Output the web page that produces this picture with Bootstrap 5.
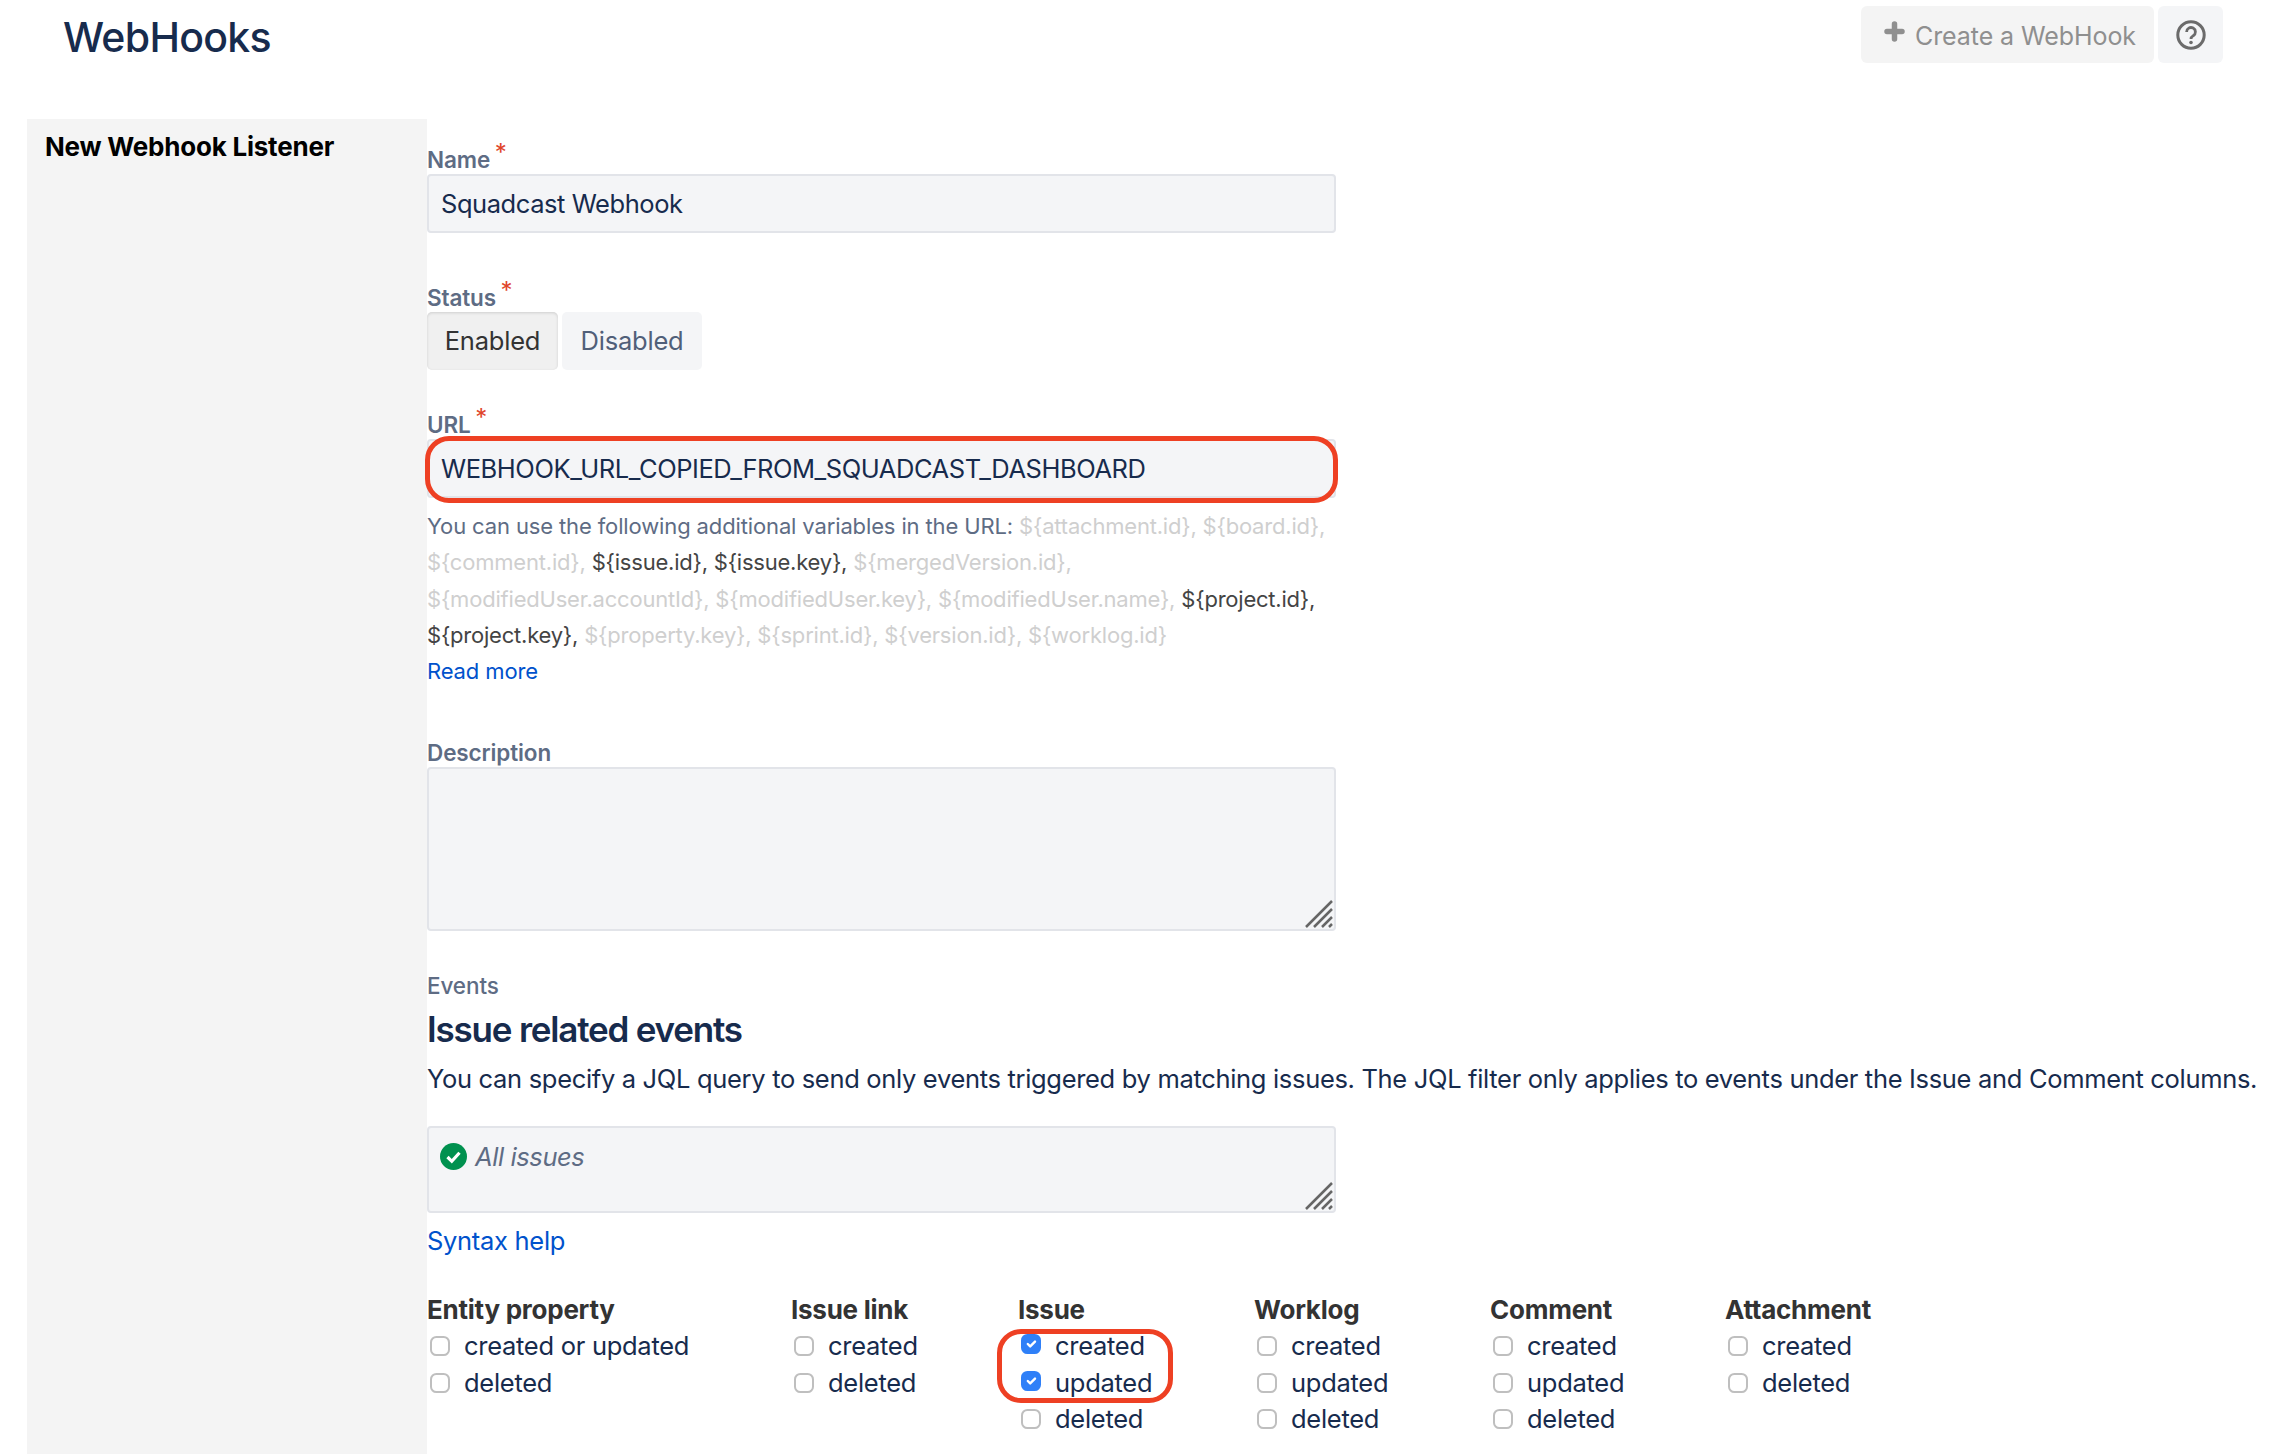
<!doctype html>
<html lang="en">
<head>
<meta charset="utf-8">
<title>WebHooks</title>
<link href="https://cdn.jsdelivr.net/npm/bootstrap@5.3.0/dist/css/bootstrap.min.css" rel="stylesheet">
<style>
html,body{height:1454px;overflow:hidden;background:#fff}
body{font-family:Inter,"Liberation Sans",sans-serif;color:#172b4d;font-size:25.5px}
.page-head{height:119px;padding:14px 51px 0 63px}
.page-title{font-size:41px;font-weight:500;line-height:46px;letter-spacing:-.7px;color:#172b4d;margin:0}
.head-actions{margin-top:-8px}
.act-btn{width:293px;height:57px;background:#f4f4f4;border:0;border-radius:6px;color:#8f8f8f;font-size:25px;line-height:57px;padding:3px 0 0 23px;letter-spacing:-.08px}
.plus-ico{margin:-9px 10px 0 0}
.help-btn{width:65px;height:57px;background:#f4f5f7;border:0;border-radius:6px;padding:0}
.side-panel{width:400px;margin-left:27px;background:#f4f4f4;height:1335px;padding:10px 18px;flex:none}
.side-title{font-size:26px;font-weight:700;color:#000;line-height:36px;letter-spacing:-.22px}
.main-pane{width:1800px;flex:none}
.fld-label{display:block;font-size:22.5px;font-weight:600;color:#5e6c84;line-height:28px;margin:0;letter-spacing:-.12px}
.req{color:#e0452a;font-size:24px;line-height:1;position:relative;top:-7px;left:-1px;font-weight:400}
.lab-name{margin-top:27px}
.lab-status{margin-top:51px}
.lab-url{margin-top:41px}
.lab-desc{margin-top:50px}
.fld-input{width:909px;height:59px;background:#f4f5f7;border:2px solid #e2e4e9;border-radius:4px;color:#172b4d;font-size:25.5px;padding:0 12px;letter-spacing:-.44px;display:block}
.fld-input:focus{background:#f4f5f7;border-color:#e2e4e9;box-shadow:none;color:#172b4d}
.tog-btn{height:58px;border:0;border-radius:5px;font-size:25.5px;line-height:58px;padding:0;background:#f4f5f7;color:#505f79;letter-spacing:-.2px}
.tog-on{width:131px;background:#f0f0f0;color:#333;box-shadow:inset 0 1px 3px rgba(0,0,0,.14)}
.tog-off{width:140px}
.note-wrap{position:relative;width:909px}
.url-ring{position:absolute;left:-2px;top:-3px;width:913px;height:67px;border:5px solid #ee4023;border-radius:24px;pointer-events:none}
.help-text{width:909px;font-size:22px;line-height:36.25px;color:#5e6c84;margin-top:10px;letter-spacing:-.13px}
.v-off{color:#cfcfcf;letter-spacing:-.2px}
.v-on{color:#444;letter-spacing:-.22px}
.jira-link{color:#0052cc;text-decoration:none}
.area-box{position:relative;width:909px;background:#f4f5f7;border:2px solid #e2e4e9;border-radius:4px}
.area-desc{height:164px}
.area-jql{height:87px;margin-top:29px;padding:11px}
.grip{position:absolute;right:1px;bottom:1px;width:28px;height:28px}
.events-label{font-size:22.5px;font-weight:500;color:#5e6c84;line-height:28px;letter-spacing:-.1px;margin-top:41px}
.sec-title{font-size:35px;font-weight:600;color:#172b4d;line-height:44px;letter-spacing:-1.2px;margin:7px 0 0}
.sec-desc{font-size:25.5px;line-height:36px;color:#172b4d;white-space:nowrap;margin:10px 0 0;letter-spacing:-.32px}
.ok-ico{margin:4px 8px 0 0;flex:none}
.jql-text{font-style:italic;color:#5e6c84;font-size:25.5px;line-height:36px;letter-spacing:-.4px}
.syntax-row{line-height:36px;margin-top:10px;letter-spacing:-.3px}
.ev-grid{display:flex;margin-top:33px}
.ev-col{position:relative;flex:none}
.ev-head{font-size:26px;font-weight:700;color:#333;line-height:36px;letter-spacing:-.25px}
.ev-row{display:flex;align-items:center;height:36.25px;padding-left:3px;color:#172b4d;font-size:25.5px;letter-spacing:-.28px}
.ev-check{width:20px;height:20px;margin:0 14px 0 0;border:2px solid #bfbfbf;border-radius:4px;background-color:#fff;flex:none;float:none}
.ev-check:checked{background-color:#2f80f8;border-color:#2f80f8;margin-top:-4px}
.ev-ring{position:absolute;left:-21px;top:37px;width:176px;height:74px;border:5px solid #ee4023;border-radius:24px;pointer-events:none}
.w1{width:364px}.w2{width:227px}.w3,.w4,.w6{width:236px}.w5{width:235px}
</style>
</head>
<body>
<header class="page-head d-flex justify-content-between align-items-start">
  <h1 class="page-title">WebHooks</h1>
  <div class="head-actions d-flex gap-1">
    <button class="act-btn d-flex align-items-center" type="button">
      <svg class="plus-ico" width="21" height="21" viewBox="0 0 21 21"><path d="M10.5 3v15M3 10.500h15" stroke="#8f8f8f" stroke-width="5.500" stroke-linecap="round"/></svg>
      <span>Create a WebHook</span>
    </button>
    <button class="help-btn d-flex align-items-center justify-content-center" type="button" aria-label="Help">
      <svg width="30" height="30" viewBox="0 0 30 30"><circle cx="15" cy="15" r="13.200" fill="none" stroke="#6b6b6b" stroke-width="3"/><path d="M10.600 12a4.400 4.400 0 1 1 6.700 3.700c-1.500 1-2.300 1.700-2.300 3.200" fill="none" stroke="#6b6b6b" stroke-width="2.800"/><circle cx="15" cy="22.500" r="1.800" fill="#6b6b6b"/></svg>
    </button>
  </div>
</header>
<div class="d-flex">
  <aside class="side-panel"><div class="side-title">New Webhook Listener</div></aside>
  <main class="main-pane">
    <form>
      <label class="fld-label lab-name">Name <span class="req">*</span></label>
      <input class="form-control fld-input" type="text" value="Squadcast Webhook">

      <label class="fld-label lab-status">Status <span class="req">*</span></label>
      <div class="d-flex gap-1">
        <button class="tog-btn tog-on" type="button">Enabled</button>
        <button class="tog-btn tog-off" type="button">Disabled</button>
      </div>

      <label class="fld-label lab-url">URL <span class="req">*</span></label>
      <div class="note-wrap">
        <input class="form-control fld-input" type="text" value="WEBHOOK_URL_COPIED_FROM_SQUADCAST_DASHBOARD">
        <div class="url-ring"></div>
      </div>
      <div class="help-text">
        You can use the following additional variables in the URL: <span class="v-off">${attachment.id}, ${board.id},</span><br>
        <span class="v-off">${comment.id},</span> <span class="v-on">${issue.id}, ${issue.key},</span> <span class="v-off">${mergedVersion.id},</span><br>
        <span class="v-off">${modifiedUser.accountId}, ${modifiedUser.key}, ${modifiedUser.name},</span> <span class="v-on">${project.id},</span><br>
        <span class="v-on">${project.key},</span> <span class="v-off">${property.key}, ${sprint.id}, ${version.id}, ${worklog.id}</span><br>
        <a class="jira-link" href="#">Read more</a>
      </div>

      <label class="fld-label lab-desc">Description</label>
      <div class="area-box area-desc">
        <svg class="grip" viewBox="0 0 28 28"><path d="M1 27 27 1M9 27 27 9M17 27 27 17M24 27 27 24" stroke="#666" stroke-width="2.500" fill="none"/></svg>
      </div>

      <div class="events-label">Events</div>
      <h2 class="sec-title">Issue related events</h2>
      <p class="sec-desc">You can specify a JQL query to send only events triggered by matching issues. The JQL filter only applies to events under the Issue and Comment columns.</p>

      <div class="area-box area-jql d-flex align-items-start">
        <svg class="ok-ico" width="27" height="27" viewBox="0 0 27 27"><circle cx="13.500" cy="13.500" r="13.500" fill="#00914f"/><path d="M7.500 14l4.300 4.300 7.700-8.500" fill="none" stroke="#fff" stroke-width="3.200"/></svg>
        <span class="jql-text">All issues</span>
        <svg class="grip" viewBox="0 0 28 28"><path d="M1 27 27 1M9 27 27 9M17 27 27 17M24 27 27 24" stroke="#666" stroke-width="2.500" fill="none"/></svg>
      </div>
      <div class="syntax-row"><a class="jira-link" href="#">Syntax help</a></div>

      <div class="ev-grid">
        <div class="ev-col w1">
          <div class="ev-head">Entity property</div>
          <div class="ev-row"><input class="form-check-input ev-check" type="checkbox">created or updated</div>
          <div class="ev-row"><input class="form-check-input ev-check" type="checkbox">deleted</div>
        </div>
        <div class="ev-col w2">
          <div class="ev-head">Issue link</div>
          <div class="ev-row"><input class="form-check-input ev-check" type="checkbox">created</div>
          <div class="ev-row"><input class="form-check-input ev-check" type="checkbox">deleted</div>
        </div>
        <div class="ev-col w3">
          <div class="ev-head">Issue</div>
          <div class="ev-row"><input class="form-check-input ev-check" type="checkbox" checked>created</div>
          <div class="ev-row"><input class="form-check-input ev-check" type="checkbox" checked>updated</div>
          <div class="ev-row"><input class="form-check-input ev-check" type="checkbox">deleted</div>
          <div class="ev-ring"></div>
        </div>
        <div class="ev-col w4">
          <div class="ev-head">Worklog</div>
          <div class="ev-row"><input class="form-check-input ev-check" type="checkbox">created</div>
          <div class="ev-row"><input class="form-check-input ev-check" type="checkbox">updated</div>
          <div class="ev-row"><input class="form-check-input ev-check" type="checkbox">deleted</div>
        </div>
        <div class="ev-col w5">
          <div class="ev-head">Comment</div>
          <div class="ev-row"><input class="form-check-input ev-check" type="checkbox">created</div>
          <div class="ev-row"><input class="form-check-input ev-check" type="checkbox">updated</div>
          <div class="ev-row"><input class="form-check-input ev-check" type="checkbox">deleted</div>
        </div>
        <div class="ev-col w6">
          <div class="ev-head">Attachment</div>
          <div class="ev-row"><input class="form-check-input ev-check" type="checkbox">created</div>
          <div class="ev-row"><input class="form-check-input ev-check" type="checkbox">deleted</div>
        </div>
      </div>
    </form>
  </main>
</div>
<script src="https://cdn.jsdelivr.net/npm/bootstrap@5.3.0/dist/js/bootstrap.bundle.min.js"></script>
</body>
</html>
